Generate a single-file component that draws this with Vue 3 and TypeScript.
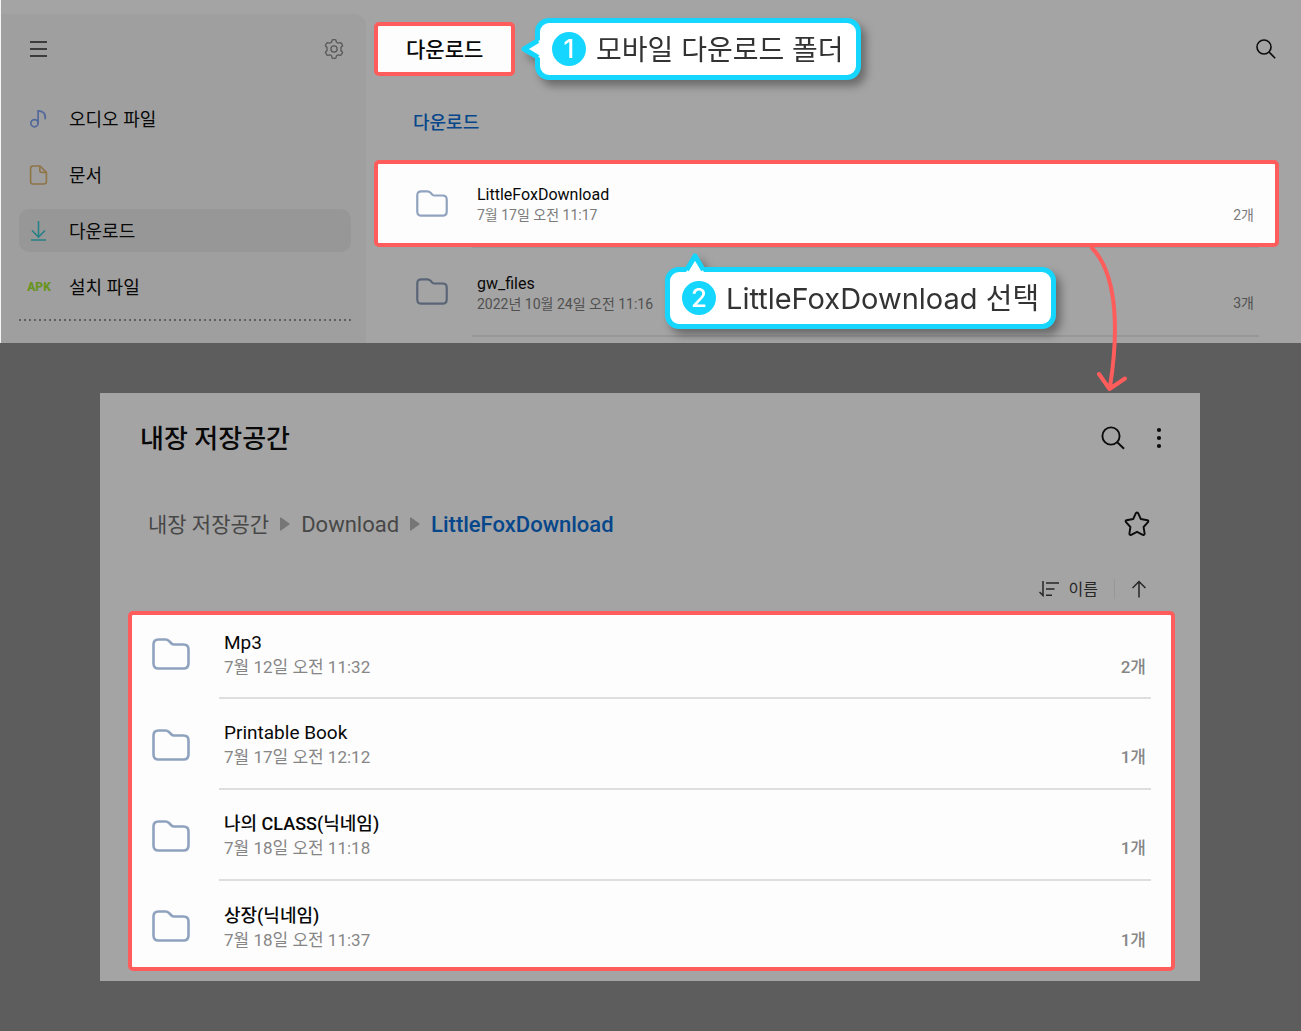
<script setup lang="ts">
interface Entry {
  name: string
  date: string
  count: string
}

const recent: Entry[] = [
  { name: 'LittleFoxDownload', date: '7월 17일 오전 11:17', count: '2개' },
  { name: 'gw_files', date: '2022년 10월 24일 오전 11:16', count: '3개' },
]

const folders: Entry[] = [
  { name: 'Mp3', date: '7월 12일 오전 11:32', count: '2개' },
  { name: 'Printable Book', date: '7월 17일 오전 12:12', count: '1개' },
  { name: '나의 CLASS(닉네임)', date: '7월 18일 오전 11:18', count: '1개' },
  { name: '상장(닉네임)', date: '7월 18일 오전 11:37', count: '1개' },
]

const isHangul = (text: string): boolean => /[가-힣]/.test(text)
</script>

<template>
  <div class="page">
    <section class="top">
      <aside class="sidebar">
        <div class="tools">
          <button type="button" aria-label="메뉴">
            <svg width="18" height="18" viewBox="0 0 18 18" fill="none" stroke="#1c1c1c" stroke-width="1.7">
              <path d="M0 2H17M0 9H17M0 16H17" />
            </svg>
          </button>
          <button type="button" aria-label="설정">
            <svg width="20" height="20" viewBox="0 0 20 20" fill="none" stroke="#595959" stroke-width="1.3" stroke-linejoin="round">
              <path d="M8.2 0.9Q10 0.4 11.8 0.9L12.5 3.3Q13.3 3.8 14.1 4.1L16.6 3.6Q18 4.9 18.6 6.7L16.9 8.5Q17.1 10 16.9 11.5L18.6 13.3Q18 15.1 16.6 16.4L14.1 15.9Q13.3 16.2 12.5 16.7L11.8 19.1Q10 19.6 8.2 19.1L7.5 16.7Q6.7 16.2 5.9 15.9L3.4 16.4Q2 15.1 1.4 13.3L3.1 11.5Q2.9 10 3.1 8.5L1.4 6.7Q2 4.9 3.4 3.6L5.9 4.1Q6.7 3.8 7.5 3.3Z" />
              <circle cx="10" cy="10" r="3.1" />
            </svg>
          </button>
        </div>
        <nav class="menu">
          <a href="#audio">
            <svg class="glyph" width="20" height="20" viewBox="0 0 20 20" fill="none" stroke="#52699b" stroke-width="1.7" stroke-linecap="round">
              <circle cx="5.500" cy="14.200" r="3.600" />
              <path d="M9.100 14.200V1.800C13.500 1.800 16.800 4.300 16.200 9.600" />
            </svg>
            <span class="label">오디오 파일</span>
          </a>
          <a href="#docs">
            <svg class="glyph" width="20" height="20" viewBox="0 0 20 20" fill="none" stroke="#8f7448" stroke-width="1.6" stroke-linejoin="round">
              <path d="M4 1H11L17.400 7.400V16.600Q17.400 19 15 19H4Q1.600 19 1.600 16.600V3.400Q1.600 1 4 1Z" />
              <path d="M10.800 1.400V5.600Q10.800 7.400 12.600 7.400H17" />
            </svg>
            <span class="label">문서</span>
          </a>
          <a href="#downloads" class="on" aria-current="page">
            <svg class="glyph" width="20" height="22" viewBox="0 0 20 22" fill="none" stroke="#268287" stroke-width="1.6">
              <path d="M9.500 1V16.500M3 10.500L9.500 17L16 10.500M2 20H17" />
            </svg>
            <span class="label">다운로드</span>
          </a>
          <a href="#apk">
            <span class="glyph apk">APK</span>
            <span class="label">설치 파일</span>
          </a>
        </nav>
        <div class="dots"></div>
      </aside>

      <main class="main">
        <header class="bar">
          <div class="spot title-spot">
            <h1>다운로드</h1>
            <div class="callout beside">
              <svg class="tail" width="20" height="24" viewBox="0 0 20 24">
                <path d="M3 12L20 2.500V21.500Z" fill="#fff" />
                <path d="M17 3.600L3 12L17 20.400" fill="none" stroke="#14d6ff" stroke-width="5" stroke-linejoin="round" />
              </svg>
              <span class="num">1</span><span class="label">모바일 다운로드 폴더</span>
            </div>
          </div>
          <button type="button" class="search" aria-label="검색">
            <svg width="20" height="20" viewBox="0 0 20 20" fill="none" stroke="#0c0c0c" stroke-width="1.600">
              <circle cx="8" cy="8" r="7" />
              <path d="M13 13L19.200 19.200" />
            </svg>
          </button>
        </header>
        <h2>다운로드</h2>
        <div class="recent">
          <div v-for="(f, i) in recent" :key="f.name" class="holder" :class="i === 0 ? 'spot' : 'dim'">
            <a href="#folder" class="row">
              <svg class="folder" width="32" height="27" viewBox="0 0 38 32" fill="none" :stroke="i === 0 ? '#8fa3bf' : '#596577'" stroke-width="2.600" stroke-linejoin="round">
                <path d="M1.500 6.500Q1.500 1.500 6.500 1.500H13.500Q15.500 1.500 17 3L19.500 5.500Q20.500 6.500 22 6.500H31.500Q36.500 6.500 36.500 11.500V25.500Q36.500 30.500 31.500 30.500H6.500Q1.500 30.500 1.500 25.500Z" />
              </svg>
              <span class="body">
                <span class="names">
                  <span class="name">{{ f.name }}</span>
                  <span class="date">{{ f.date }}</span>
                </span>
                <span class="count">{{ f.count }}</span>
              </span>
            </a>
            <div v-if="i === 0" class="callout below">
              <svg class="tail" width="24" height="20" viewBox="0 0 24 20">
                <path d="M12 3L2.500 20H21.500Z" fill="#fff" />
                <path d="M3.600 17L12 3L20.400 17" fill="none" stroke="#14d6ff" stroke-width="5" stroke-linejoin="round" />
              </svg>
              <span class="num">2</span><span class="label">LittleFoxDownload 선택</span>
            </div>
          </div>
        </div>
      </main>
    </section>

    <svg class="arrow" width="42" height="150" viewBox="0 0 42 150" fill="none" stroke="#ff5c5c" stroke-linecap="round" stroke-linejoin="round" stroke-width="4">
      <path d="M4 4C31 32 30 92 22 143M11 130L21.500 145L37 134.500" />
    </svg>

    <section class="panel">
      <header class="panel-head">
        <h1>내장 저장공간</h1>
        <button type="button" aria-label="검색">
          <svg width="24" height="24" viewBox="0 0 24 24" fill="none" stroke="#0c0c0c" stroke-width="1.900">
            <circle cx="10" cy="10" r="8.600" />
            <path d="M16 16L23 22.800" />
          </svg>
        </button>
        <button type="button" aria-label="더보기">
          <svg width="6" height="22" viewBox="0 0 6 22" fill="#0c0c0c">
            <circle cx="3" cy="3" r="2.100" />
            <circle cx="3" cy="11" r="2.100" />
            <circle cx="3" cy="19" r="2.100" />
          </svg>
        </button>
      </header>
      <nav class="crumbs">
        <a href="#storage" class="label">내장 저장공간</a>
        <svg width="10" height="14" viewBox="0 0 10 14" fill="#767676"><path d="M0 1Q0 0 1 0.600L9.400 6.400Q10 7 9.400 7.600L1 13.400Q0 14 0 13Z" /></svg>
        <a href="#download" class="latin label">Download</a>
        <svg width="10" height="14" viewBox="0 0 10 14" fill="#767676"><path d="M0 1Q0 0 1 0.600L9.400 6.400Q10 7 9.400 7.600L1 13.400Q0 14 0 13Z" /></svg>
        <a href="#littlefox" class="latin label here">LittleFoxDownload</a>
        <button type="button" class="star" aria-label="즐겨찾기">
          <svg width="26" height="26" viewBox="0 0 26 26" fill="none" stroke="#0c0c0c" stroke-width="1.900" stroke-linejoin="round">
            <path d="M11.900 2.200Q13 0.800 14.100 2.200L16.800 8L23.400 9.200Q25 9.800 24 11.200L19.600 16L20.600 22.600Q20.500 24.400 18.800 23.800L13 20.800L7.200 23.800Q5.500 24.400 5.400 22.600L6.400 16L2 11.200Q1 9.800 2.600 9.200L9.200 8Z" />
          </svg>
        </button>
      </nav>
      <div class="sort">
        <button type="button" class="by">
          <svg width="20" height="16" viewBox="0 0 20 16" fill="none" stroke="#262626" stroke-width="1.500">
            <path d="M4 0V14.500L0.500 11M7 2H20M7 8H15.500M7 14.300H13" />
          </svg>
          <span class="label">이름</span>
        </button>
        <button type="button" class="dir" aria-label="오름차순">
          <svg width="14" height="18" viewBox="0 0 14 18" fill="none" stroke="#262626" stroke-width="1.500">
            <path d="M7 17.500V1.500M0.500 8L7 1.500L13.500 8" />
          </svg>
        </button>
      </div>
      <div class="spot list">
        <a v-for="f in folders" :key="f.name" href="#folder" class="row">
          <svg class="folder" width="38" height="32" viewBox="0 0 38 32" fill="none" stroke="#8fa3bf" stroke-width="2.600" stroke-linejoin="round">
            <path d="M1.500 6.500Q1.500 1.500 6.500 1.500H13.500Q15.500 1.500 17 3L19.500 5.500Q20.500 6.500 22 6.500H31.500Q36.500 6.500 36.500 11.500V25.500Q36.500 30.500 31.500 30.500H6.500Q1.500 30.500 1.500 25.500Z" />
          </svg>
          <span class="body">
            <span class="names">
              <span class="name" :class="{ hangul: isHangul(f.name) }">{{ f.name }}</span>
              <span class="date">{{ f.date }}</span>
            </span>
            <span class="count">{{ f.count }}</span>
          </span>
        </a>
      </div>
    </section>
  </div>
</template>

<style>
body {
  margin: 0;
  background: #5d5d5d;
}
</style>

<style scoped>
.page {
  position: relative;
  box-sizing: border-box;
  min-height: 100vh;
  padding-bottom: 50px;
  background: #5d5d5d;
  color: #080808;
  font-family: Roboto, "Noto Sans CJK KR", sans-serif;
}
.page *,
.page *::before {
  box-sizing: border-box;
}
h1,
h2 {
  margin: 0;
  font-weight: 500;
}
a {
  color: inherit;
  text-decoration: none;
}
button {
  display: flex;
  align-items: center;
  padding: 0;
  border: 0;
  background: none;
  color: inherit;
  font: inherit;
}
svg {
  display: block;
  flex: none;
}
.label {
  padding-top: 2px;
}
.spot {
  position: relative;
  border: 4px solid #ff5c5c;
  border-radius: 5px;
  background: #fdfdfd;
}

.top {
  display: flex;
  min-height: 343px;
  border-left: 1px solid #f4f4f4;
  background: #a4a4a4;
}
.sidebar {
  flex: none;
  width: 365px;
  margin-top: 14px;
  padding: 0 15px 0 18px;
  border-radius: 0 12px 0 0;
  background: #9f9f9f;
}
.tools {
  display: flex;
  justify-content: space-between;
  align-items: center;
  height: 70px;
  padding: 0 7px 0 11px;
}
.menu {
  display: flex;
  flex-direction: column;
  gap: 13px;
  margin-top: 13px;
}
.menu a {
  display: flex;
  align-items: center;
  gap: 20px;
  height: 43px;
  padding-left: 10px;
  border-radius: 10px;
  font-size: 18px;
  line-height: 24px;
}
.menu .on {
  background: #979797;
}
.menu .glyph {
  width: 20px;
}
.apk {
  display: flex;
  justify-content: center;
  color: #67941c;
  font-size: 12px;
  font-weight: 800;
}
.dots {
  height: 2px;
  margin-top: 11px;
  background: repeating-linear-gradient(90deg, #606060 0 2px, transparent 2px 5px);
}

.main {
  flex: 1;
  min-width: 0;
  padding: 22px 22px 0 8px;
}
.bar {
  display: flex;
  justify-content: space-between;
  align-items: center;
}
.title-spot {
  width: 141px;
  height: 54px;
  padding-left: 28px;
}
.title-spot h1 {
  padding-top: 1px;
  font-size: 21px;
  line-height: 46px;
}
.search {
  margin-right: 3px;
}
h2 {
  margin: 35px 0 0 39px;
  color: #06468a;
  font-size: 18px;
  line-height: 24px;
}
.recent {
  margin-top: 25px;
}
.row {
  display: flex;
  align-items: center;
}
.body {
  display: flex;
  flex: 1;
  align-items: center;
  justify-content: space-between;
}
.names {
  display: flex;
  flex-direction: column;
}
.count {
  align-self: flex-end;
}
.recent .row {
  height: 79px;
  padding: 0 16px 0 38px;
}
.recent .body {
  margin-left: 24px;
  padding: 2px 5px 0;
}
.recent .name {
  font-size: 16px;
  line-height: 20px;
}
.recent .date,
.recent .count {
  color: #7b7b7b;
  font-size: 14px;
  line-height: 20px;
}
.dim {
  padding: 0 4px;
}
.recent .dim .row {
  height: 90px;
}
.recent .dim .body {
  height: 90px;
  padding: 26px 5px 22px;
  border-top: 1px solid #979797;
  border-bottom: 2px solid #979797;
}
.dim .folder {
  margin-bottom: 2px;
}
.recent .dim .date,
.recent .dim .count {
  color: #505050;
}

.callout {
  position: absolute;
  z-index: 2;
  display: flex;
  align-items: center;
  gap: 10px;
  height: 62px;
  padding: 0 12px;
  border: 5px solid #14d6ff;
  border-radius: 14px;
  background: #fff;
  color: #333;
  filter: drop-shadow(5px 6px 4px rgba(0, 0, 0, 0.35));
  font-family: Inter, "Noto Sans CJK KR", sans-serif;
  font-size: 28px;
  line-height: 40px;
  white-space: nowrap;
}
.beside {
  top: -8px;
  left: 157px;
}
.below {
  top: 103px;
  left: 287px;
  font-size: 29px;
}
.tail {
  position: absolute;
}
.beside .tail {
  top: 14px;
  left: -19px;
}
.below .tail {
  top: -19px;
  left: 13px;
}
.num {
  width: 34px;
  height: 34px;
  border-radius: 50%;
  background: #14d6ff;
  color: #fff;
  font-size: 26px;
  font-weight: 500;
  line-height: 34px;
  text-align: center;
}
.arrow {
  position: absolute;
  top: 244px;
  right: 171px;
  z-index: 3;
}

.panel {
  margin: 50px 101px 0 100px;
  padding: 20px 25px 10px 28px;
  background: #a4a4a4;
}
.panel-head {
  display: flex;
  align-items: center;
  gap: 31px;
  height: 50px;
  padding: 0 13px 0 12px;
}
.panel-head h1 {
  flex: 1;
  padding-top: 2px;
  font-size: 26px;
  line-height: 40px;
}
.crumbs {
  display: flex;
  align-items: center;
  gap: 11px;
  height: 50px;
  margin-top: 36px;
  padding: 0 25px 0 20px;
  color: #474747;
  font-size: 21px;
  line-height: 40px;
}
.crumbs .latin {
  font-size: 22px;
}
.crumbs .here {
  color: #06468a;
  font-weight: 500;
}
.star {
  margin-left: auto;
}
.sort {
  display: flex;
  justify-content: flex-end;
  align-items: center;
  height: 20px;
  margin-top: 30px;
  padding-right: 29px;
  color: #262626;
  font-size: 16px;
  line-height: 20px;
}
.by {
  gap: 10px;
  height: 20px;
  padding-right: 16px;
  border-right: 1px solid #979797;
}
.dir {
  margin-left: 17px;
}
.list {
  margin-top: 12px;
}
.list .row {
  height: 91px;
  padding: 0 20px;
}
.list .row:first-child {
  height: 84px;
}
.list .row:first-child .folder {
  margin-bottom: 6px;
}
.list .row:last-child {
  height: 86px;
  padding-top: 4px;
}
.list .body {
  height: 100%;
  margin-left: 29px;
  padding: 3px 5px 0;
  border-bottom: 2px solid #dedede;
}
.list .row:first-child .body {
  padding: 0 5px 3px;
}
.list .row:last-child .body {
  border-bottom: 0;
}
.list .name {
  font-size: 19px;
  line-height: 24px;
}
.list .hangul {
  font-size: 18px;
  font-weight: 500;
}
.list .date {
  color: #868686;
  font-size: 17px;
  line-height: 24px;
}
.list .count {
  align-self: center;
  padding-top: 24px;
  color: #868686;
  font-size: 17px;
  font-weight: 500;
  line-height: 24px;
}
</style>
